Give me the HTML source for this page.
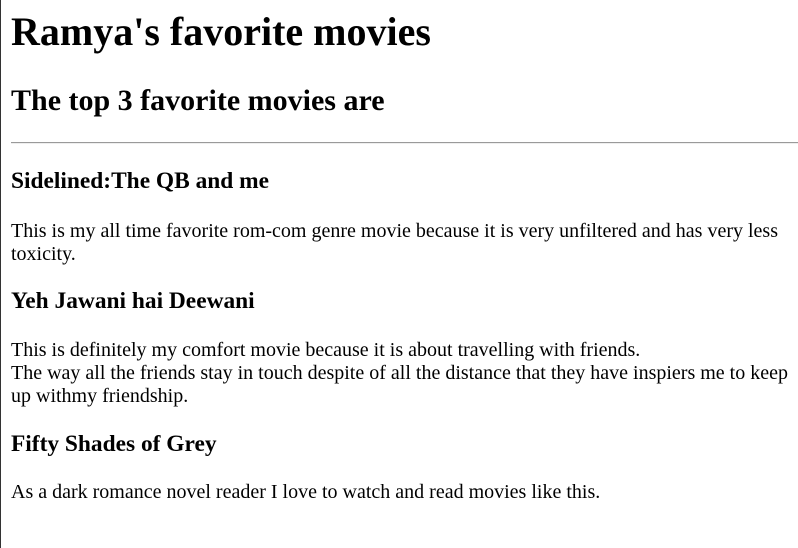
<!DOCTYPE html>
<html><head><meta charset="utf-8"><style>
html,body{margin:0;padding:0;background:#fff;}
body{width:798px;height:548px;position:relative;overflow:hidden;font-family:"Liberation Serif",serif;color:#000;}
.l{position:absolute;left:0;top:0;width:1px;height:548px;background:#333;}
.b{position:absolute;left:11px;margin:0;white-space:nowrap;}
h1.b{font-size:40px;line-height:44px;top:10px;}
h2.b{font-size:30px;line-height:33px;top:84px;}
h3.b{font-size:23.4px;line-height:26px;}
p.b{font-size:20px;line-height:23px;}
hr{position:absolute;left:11px;width:787px;top:142px;margin:0;border:0;border-top:1px solid #9a9a9a;border-bottom:1px solid #eee;}
</style></head><body>
<div class="l"></div>
<h1 class="b">Ramya's favorite movies</h1>
<h2 class="b">The top 3 favorite movies are</h2>
<hr>
<h3 class="b" style="top:168px">Sidelined:The QB and me</h3>
<p class="b" style="top:220px">This is my all time favorite rom-com genre movie because it is very unfiltered and has very less<br>toxicity.</p>
<h3 class="b" style="top:288px">Yeh Jawani hai Deewani</h3>
<p class="b" style="top:339px">This is definitely my comfort movie because it is about travelling with friends.<br>The way all the friends stay in touch despite of all the distance that they have inspiers me to keep<br>up withmy friendship.</p>
<h3 class="b" style="top:431px">Fifty Shades of Grey</h3>
<p class="b" style="top:481px">As a dark romance novel reader I love to watch and read movies like this.</p>
</body></html>
